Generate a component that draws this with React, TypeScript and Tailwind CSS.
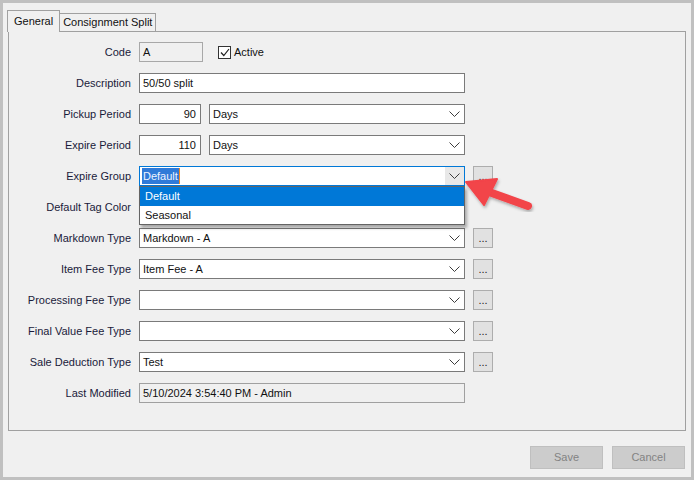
import React from "react";

const Chevron = () => (
  <svg width="11" height="7" viewBox="0 0 11 7" className="shrink-0">
    <polyline points="0.5,0.5 5.5,5.5 10.5,0.5" fill="none" stroke="#3c3c3c" strokeWidth="1" />
  </svg>
);

const Dots = () => (
  <div className="w-[20px] h-[20px] border border-[#adadad] bg-[#e1e1e1] flex items-end justify-center pb-[3px] text-[11px] leading-none text-[#1a1a1a] shrink-0">
    ...
  </div>
);

const Combo = ({ value, width = "w-[326px]" }: { value?: string; width?: string }) => (
  <div className={`${width} h-[20px] border border-[#7a7a7a] bg-white flex items-center justify-between pl-[3px] pr-[4px]`}>
    <span>{value}</span>
    <Chevron />
  </div>
);

const Row = ({ label, children }: { label: string; children?: React.ReactNode }) => (
  <div className="flex items-center h-[20px] gap-[8px]">
    <div className="w-[122px] text-right text-[#1a1a3a]">{label}</div>
    {children}
  </div>
);

export default function App() {
  return (
    <div className="w-[694px] h-[480px] bg-[#f0f0f0] border-[3px] border-[#c0c0c0] flex flex-col font-['Liberation_Sans',sans-serif] text-[11px] text-[#111] relative">
      {/* tab strip */}
      <div className="flex items-end pl-[4px] pt-[7px]">
        <div className="h-[22px] px-[6px] border border-b-0 border-[#a0a0a0] bg-[#f0f0f0] flex items-center relative z-10 -mb-px pb-[1px]">
          General
        </div>
        <div className="h-[18px] px-[3px] border border-b-0 border-l-0 border-[#a0a0a0] bg-[#f0f0f0] flex items-center">
          Consignment Split
        </div>
      </div>

      {/* panel */}
      <div className="ml-[5px] w-[678px] h-[400px] border border-[#a0a0a0] pt-[10px] flex flex-col gap-[11px]">
        <Row label="Code">
          <div className="w-[64px] h-[20px] border border-[#a8a8a8] bg-[#f0f0f0] pl-[3px] flex items-center">A</div>
          <div className="flex items-center ml-[7px] gap-[3px]">
            <div className="w-[13px] h-[13px] border border-[#333] bg-white flex items-center justify-center">
              <svg width="10" height="9" viewBox="0 0 10 9">
                <polyline points="1,4.5 3.8,7.5 9,1" fill="none" stroke="#222" strokeWidth="1.2" />
              </svg>
            </div>
            <span>Active</span>
          </div>
        </Row>
        <Row label="Description">
          <div className="w-[326px] h-[20px] border border-[#7a7a7a] bg-white pl-[3px] flex items-center">50/50 split</div>
        </Row>
        <Row label="Pickup Period">
          <div className="w-[62px] h-[20px] border border-[#7a7a7a] bg-white pr-[4px] flex items-center justify-end">90</div>
          <Combo value="Days" width="w-[256px]" />
        </Row>
        <Row label="Expire Period">
          <div className="w-[62px] h-[20px] border border-[#7a7a7a] bg-white pr-[4px] flex items-center justify-end">110</div>
          <Combo value="Days" width="w-[256px]" />
        </Row>
        <Row label="Expire Group">
          <div className="relative">
            <div className="w-[326px] h-[20px] border border-[#0078d7] bg-white flex items-center justify-between pl-[2px]">
              <span className="bg-[#2f7ad8] text-[#eef3ff] px-[1px] border-r border-[#f08a24]">Default</span>
              <div className="h-full w-[19px] bg-[#e8e8e8] flex items-center justify-center">
                <Chevron />
              </div>
            </div>
            <div className="absolute left-0 top-[20px] w-[326px] bg-white border border-[#646464] shadow-[2px_3px_3px_rgba(0,0,0,0.3)] z-20 flex flex-col">
              <div className="h-[19px] bg-[#0078d7] text-white flex items-center pl-[5px]">Default</div>
              <div className="h-[18px] flex items-center pl-[5px]">Seasonal</div>
            </div>
          </div>
          <Dots />
        </Row>
        <Row label="Default Tag Color">
          <div className="w-[326px] h-[20px]" />
        </Row>
        <Row label="Markdown Type">
          <Combo value="Markdown - A" />
          <Dots />
        </Row>
        <Row label="Item Fee Type">
          <Combo value="Item Fee - A" />
          <Dots />
        </Row>
        <Row label="Processing Fee Type">
          <Combo />
          <Dots />
        </Row>
        <Row label="Final Value Fee Type">
          <Combo />
          <Dots />
        </Row>
        <Row label="Sale Deduction Type">
          <Combo value="Test" />
          <Dots />
        </Row>
        <Row label="Last Modified">
          <div className="w-[326px] h-[20px] border border-[#a0a0a0] bg-[#f0f0f0] pl-[3px] flex items-center">
            5/10/2024 3:54:40 PM - Admin
          </div>
        </Row>
      </div>

      {/* buttons */}
      <div className="flex justify-end gap-[9px] pr-[6px] mt-[15px]">
        <div className="w-[73px] h-[23px] bg-[#cccccc] border border-[#bfbfbf] text-[#838383] flex items-center justify-center">Save</div>
        <div className="w-[73px] h-[23px] bg-[#cccccc] border border-[#bfbfbf] text-[#838383] flex items-center justify-center">Cancel</div>
      </div>

      {/* annotation arrow */}
      <svg className="absolute left-[-3px] top-[-3px] pointer-events-none z-30" width="694" height="480">
        <defs>
          <filter id="sh" x="-20%" y="-20%" width="140%" height="140%">
            <feDropShadow dx="1" dy="2" stdDeviation="1.5" floodColor="#000" floodOpacity="0.3" />
          </filter>
        </defs>
        <g filter="url(#sh)" fill="#f2444a" stroke="#f2444a">
          <line x1="489" y1="192" x2="528" y2="206" strokeWidth="8" strokeLinecap="round" />
          <polygon points="466,182 497,179 484,205" strokeWidth="2" strokeLinejoin="round" />
        </g>
      </svg>
    </div>
  );
}
